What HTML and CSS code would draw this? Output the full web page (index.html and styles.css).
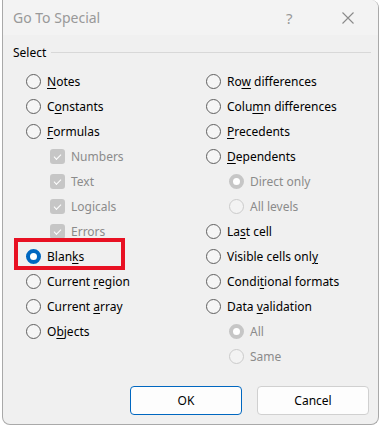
FILE: index.html
```html
<!DOCTYPE html>
<html lang="en">
<head>
  <meta charset="utf-8">
  <title>Go To Special</title>
  <link rel="stylesheet" href="styles.css">
</head>
<body>
  <div class="dialog" role="dialog" aria-labelledby="dialog-title">
    <div class="dialog__titlebar">
      <span class="dialog__title" id="dialog-title">Go To Special</span>
      <span class="dialog__help">?</span>
      <svg class="dialog__close" width="12" height="12" viewBox="0 0 12 12" aria-hidden="true">
        <path d="M0.5 0.5L11.5 11.5M11.5 0.5L0.5 11.5" stroke="#8a8a8a" stroke-width="1.1"/>
      </svg>
    </div>

    <div class="dialog__body">
      <div class="group-label">
        <span>Select</span>
        <span class="group-label__line"></span>
      </div>

      <div class="options">
        <div class="options__col">
          <label class="option"><span class="radio"></span><span><u>N</u>otes</span></label>
          <label class="option"><span class="radio"></span><span>C<u>o</u>nstants</span></label>
          <label class="option"><span class="radio"></span><span><u>F</u>ormulas</span></label>
          <label class="option option--sub option--disabled"><span class="check"></span><span>Numbers</span></label>
          <label class="option option--sub option--disabled"><span class="check"></span><span>Text</span></label>
          <label class="option option--sub option--disabled"><span class="check"></span><span>Logicals</span></label>
          <label class="option option--sub option--disabled"><span class="check"></span><span>Errors</span></label>
          <label class="option option--marked"><span class="radio radio--on"></span><span>Blan<u>k</u>s</span><span class="highlight"></span></label>
          <label class="option"><span class="radio"></span><span>Current <u>r</u>egion</span></label>
          <label class="option"><span class="radio"></span><span>Current <u>a</u>rray</span></label>
          <label class="option"><span class="radio"></span><span>O<u>b</u>jects</span></label>
        </div>

        <div class="options__col">
          <label class="option"><span class="radio"></span><span>Ro<u>w</u> differences</span></label>
          <label class="option"><span class="radio"></span><span>Colu<u>m</u>n differences</span></label>
          <label class="option"><span class="radio"></span><span><u>P</u>recedents</span></label>
          <label class="option"><span class="radio"></span><span><u>D</u>ependents</span></label>
          <label class="option option--sub option--disabled"><span class="radio radio--dim-on"></span><span>Direct only</span></label>
          <label class="option option--sub option--disabled"><span class="radio radio--dim"></span><span>All levels</span></label>
          <label class="option"><span class="radio"></span><span>La<u>s</u>t cell</span></label>
          <label class="option"><span class="radio"></span><span>Visible cells onl<u>y</u></span></label>
          <label class="option"><span class="radio"></span><span>Condi<u>t</u>ional formats</span></label>
          <label class="option"><span class="radio"></span><span>Data <u>v</u>alidation</span></label>
          <label class="option option--sub option--disabled"><span class="radio radio--dim-on"></span><span>All</span></label>
          <label class="option option--sub option--disabled"><span class="radio radio--dim"></span><span>Same</span></label>
        </div>
      </div>

      <div class="dialog__actions">
        <button class="button button--default">OK</button>
        <button class="button">Cancel</button>
      </div>
    </div>
  </div>
</body>
</html>
```

FILE: styles.css
```css
*, *::before, *::after {
  margin: 0;
  padding: 0;
  box-sizing: border-box;
}

html {
  color: #000000;
  font-size: 12px;
  font-family: "Noto Sans", "Open Sans", sans-serif;
}

body {
  min-height: 100vh;
  background-color: #ffffff;
}

u {
  text-underline-offset: 2px;
}

.dialog {
  width: 377px;
  height: 425px;
  margin-left: 2px;
  border: 1px solid #a9a9a9;
  border-top: none;
  border-radius: 0 8px 8px 8px;
  background-color: #f0f0f0;
  overflow: hidden;
}

.dialog__titlebar {
  display: flex;
  align-items: center;
  height: 35px;
  padding-left: 10px;
  background-color: #f3f3f3;
}

.dialog__title {
  flex: 1;
  color: #999999;
  font-size: 14px;
}

.dialog__help {
  width: 14px;
  margin-right: 42px;
  color: #999999;
  font-size: 15px;
}

.dialog__close {
  margin-right: 24px;
}

.dialog__body {
  padding: 9px 9px 0 10px;
}

.group-label {
  display: flex;
  align-items: center;
  gap: 5px;
  height: 16px;
}

.group-label__line {
  flex: 1;
  height: 1px;
  margin-right: -2px;
  background-color: #d8d8d8;
}

.options {
  display: grid;
  grid-template-columns: 180px 1fr;
  padding: 9px 0 0 13px;
}

.option {
  position: relative;
  display: flex;
  align-items: center;
  gap: 6px;
  height: 25px;
  white-space: nowrap;
}

.option--sub {
  padding-left: 23px;
}

.option--disabled {
  color: #8b8b8b;
}

.radio {
  flex: none;
  width: 15px;
  height: 15px;
  border: 1px solid #5f5f5f;
  border-radius: 50%;
  background-color: #f5f5f5;
}

.radio--on {
  border: 4px solid #0067c0;
  background-color: #ffffff;
}

.radio--dim {
  border-color: #cbcbcb;
  background-color: #f3f3f3;
}

.radio--dim-on {
  border: 4px solid #c6c6c6;
  background-color: #ffffff;
}

.check {
  flex: none;
  display: flex;
  align-items: center;
  justify-content: center;
  width: 15px;
  height: 15px;
  margin-left: 1px;
  border-radius: 3px;
  background-color: #c6c6c6;
}

.check::after {
  content: "";
  width: 7px;
  height: 4px;
  margin-top: -2px;
  border-left: 1px solid #ffffff;
  border-bottom: 1px solid #ffffff;
  transform: rotate(-45deg);
}

.highlight {
  position: absolute;
  top: -6px;
  left: -12px;
  width: 111px;
  height: 32px;
  border: 4px solid #e81123;
}

.dialog__actions {
  display: flex;
  justify-content: flex-end;
  gap: 15px;
  margin-top: 17px;
}

.button {
  width: 112px;
  height: 29px;
  border: 1px solid #d0d0d0;
  border-radius: 4px;
  background-color: #fdfdfd;
  color: #000000;
  font-size: 12px;
  font-family: inherit;
}

.button--default {
  border-color: #0067c0;
}
```
